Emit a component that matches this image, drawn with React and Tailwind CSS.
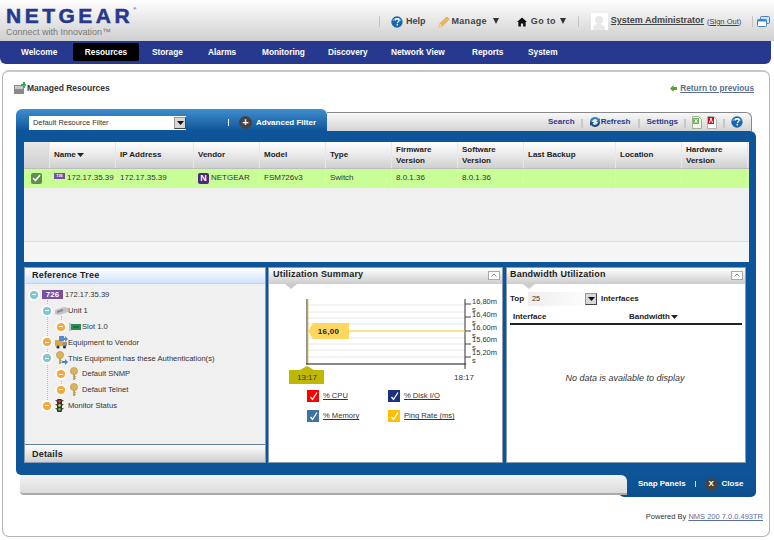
import React from "react";

const Caret = () => (
  <svg width="6" height="6" viewBox="0 0 6 6" className="inline-block shrink-0"><path d="M0 0h6L3 6z" fill="#333" /></svg>
);
const SmallCaret = () => (
  <svg width="7" height="4" viewBox="0 0 7 4" className="inline-block"><path d="M0 0h7L3.5 4z" fill="#222" /></svg>
);
const HelpIcon = ({ s = 12 }) => (
  <svg width={s} height={s} viewBox="0 0 14 14" className="shrink-0">
    <circle cx="7" cy="7" r="6.6" fill="#1a66ad" />
    <path d="M1.5 6A5.6 4.4 0 0 1 12.5 6 8 4 0 0 0 1.5 6z" fill="#6aa8dc" />
    <path d="M4.8 5.2C4.9 3.8 6 3.2 7.1 3.2c1.4 0 2.3.8 2.3 1.9 0 1.7-2 1.6-2 3.3" fill="none" stroke="#fff" strokeWidth="1.5" />
    <rect x="6.5" y="9.4" width="1.7" height="1.6" fill="#fff" />
  </svg>
);
const Pencil = () => (
  <svg width="12" height="12" viewBox="0 0 13 13" className="shrink-0">
    <path d="M1 12l1-3.5L9.5 1l2.5 2.5L4.5 11z" fill="#f0b94a" stroke="#c98c2a" strokeWidth=".6" />
    <path d="M1 12l1-3.5L4.5 11z" fill="#f5dfb0" />
  </svg>
);
const House = () => (
  <svg width="10" height="10" viewBox="0 0 11 11" className="shrink-0 block">
    <path d="M5.5.5L11 5.5H9.5V10.5H6.7V7.2H4.3V10.5H1.5V5.5H0z" fill="#111" />
  </svg>
);
const Sep = () => <span className="block h-[11px] w-px bg-[#c4c4c4]" />;
const TSep = () => <span className="h-[9px] w-[2px] border-x border-[#c8c8c8] mt-[2px]" />;

const Select = ({ label, w, bg = "bg-white" }) => (
  <div className={`flex h-[14px] items-center justify-between ${w} ${bg}`}>
    <span className="pl-[4px] text-[7.4px] text-[#333]">{label}</span>
    <span className="flex h-[12px] w-[12px] items-center justify-center border border-[#999] border-r-[#444] border-b-[#444] bg-[#d8d8d8]">
      <svg width="7" height="4" viewBox="0 0 7 4"><path d="M0 0h7L3.5 4z" fill="#111" /></svg>
    </span>
  </div>
);

const columns = [
  ["Name", "w-[66px]", "172.17.35.39"],
  ["IP Address", "w-[78px]", "172.17.35.39"],
  ["Vendor", "w-[66px]", "NETGEAR"],
  ["Model", "w-[66px]", "FSM726v3"],
  ["Type", "w-[66px]", "Switch"],
  ["Firmware Version", "w-[66px]", "8.0.1.36"],
  ["Software Version", "w-[66px]", "8.0.1.36"],
  ["Last Backup", "w-[92px]", ""],
  ["Location", "w-[66px]", ""],
  ["Hardware Version", "w-[66px]", ""],
];

const Badge = () => (
  <span className="flex h-[6px] w-[11px] items-center justify-center bg-[#7a4fa0] text-[4px] font-bold leading-none text-white">726</span>
);

const Table = () => (
  <div className="flex h-[120px] w-[725px] flex-col bg-[#f0f0f0]">
    <div className="flex h-[27px] bg-gradient-to-b from-[#ffffff] via-[#e9e9e9] to-[#cfcfcf] border-b border-[#bdbdbd]">
      <div className="w-[26px] border-r border-[#e8e8e8] bg-gradient-to-b from-[#e6e6e6] to-[#cfcfcf]" />
      {columns.map(([h, w]) => (
        <div key={h} className={`flex ${w} items-center gap-[1px] border-r border-[#e8e8e8] pb-[1px] pl-[4px] text-[8px] font-bold leading-[11px] text-[#222]`}>
          <span className={h === "Name" ? "" : "max-w-[50px]"}>{h}</span>
          {h === "Name" && <SmallCaret />}
        </div>
      ))}
    </div>
    <div className="flex h-[19px] bg-[#c9fd96] border-b border-[#dfe8d0]">
      <div className="flex w-[26px] items-center justify-center border-r border-[#e0f0c8]">
        <span className="flex h-[11px] w-[11px] items-center justify-center rounded-[2px] bg-[#5f8f4f]">
          <svg width="9" height="8" viewBox="0 0 9 8"><path d="M1 4l2.5 2.5L8 1" fill="none" stroke="#fff" strokeWidth="1.6" /></svg>
        </span>
      </div>
      {columns.map(([h, w, v]) => (
        <div key={h} className={`flex ${w} items-center border-r border-[#e0f0c8] pl-[4px] text-[8px] text-[#333]`}>
          {h === "Name" && <span className="mr-[2px] mb-[4px]"><Badge /></span>}
          {h === "Vendor" && (
            <span className="mr-[2px] flex h-[11px] w-[11px] items-center justify-center rounded-[2px] bg-[#4a2a80] text-[9px] font-bold leading-none text-white">N</span>
          )}
          {v}
        </div>
      ))}
    </div>
    <div className="flex-1" />
    <div className="h-[21px] border-t border-[#dddddd] bg-[#f5f5f5]" />
  </div>
);

const Expand = ({ color }) => (
  <span className="relative z-10 flex h-[8px] w-[8px] shrink-0 items-center justify-center rounded-full" style={{ background: color, boxShadow: "0 0 0 2px #fafafa" }}>
    <span className="h-px w-[4px] bg-white" />
  </span>
);

const Key = ({ arrow }) => (
  <svg width="13" height="14" viewBox="0 0 13 14" className="shrink-0">
    <circle cx="5" cy="4" r="3.6" fill="#d9b45a" stroke="#a98a3c" strokeWidth=".5" />
    <path d="M4 7h2v6H4zM6 9h1v1H6zM6 11h1v1H6z" fill="#c9a44f" />
    {arrow && <path d="M7 10h3V8l3 3-3 3v-2H7z" fill="#3d86d6" />}
  </svg>
);
const UnitIcon = () => (
  <svg width="13" height="10" viewBox="0 0 13 10" className="shrink-0">
    <path d="M0 4l9-3 4 1v4l-9 3-4-1z" fill="#bfc4cb" />
    <path d="M2 5l6-2v2l-6 2z" fill="#808890" />
  </svg>
);
const SlotIcon = () => (
  <svg width="12" height="8" viewBox="0 0 12 8" className="shrink-0">
    <rect x="0" y="0" width="2" height="8" fill="#b9c8b9" />
    <rect x="2" y="1" width="10" height="6" fill="#2e8b57" />
    <rect x="4" y="3" width="6" height="2" fill="#174" />
  </svg>
);
const TruckIcon = () => (
  <svg width="13" height="13" viewBox="0 0 13 13" className="shrink-0">
    <rect x="0" y="4" width="8" height="6" fill="#d8a848" />
    <rect x="4" y="0" width="5" height="5" fill="#5a88c8" />
    <path d="M8 2h2V0l3 3-3 3V4H8z" fill="#4a90e2" />
    <rect x="8" y="6" width="4" height="4" fill="#8a94a0" />
    <circle cx="3" cy="11" r="1.6" fill="#333" />
    <circle cx="9.5" cy="11" r="1.6" fill="#333" />
  </svg>
);
const Traffic = () => (
  <svg width="9" height="13" viewBox="0 0 9 13" className="shrink-0">
    <rect x="2" y="0" width="5" height="13" rx="1" fill="#333" />
    <path d="M0 1h2v2zM9 1H7v2zM0 5h2v2zM9 5H7v2zM0 9h2v2zM9 9H7v2z" fill="#555" />
    <circle cx="4.5" cy="2.4" r="1.3" fill="#d33" />
    <circle cx="4.5" cy="6.4" r="1.3" fill="#dc3" />
    <circle cx="4.5" cy="10.4" r="1.3" fill="#4c4" />
  </svg>
);

const tree = [
  { ml: "ml-0", color: "#7fc6cf", slot: "w-[23px]", icon: <span className="flex h-[9px] w-[21px] items-center justify-center bg-[#7a4fa0] text-[8px] font-bold leading-none text-white">726</span>, label: "172.17.35.39" },
  { ml: "ml-[13px]", color: "#7fc6cf", slot: "w-[13px]", icon: <UnitIcon />, label: "Unit 1" },
  { ml: "ml-[27px]", color: "#f0a93a", slot: "w-[13px]", icon: <SlotIcon />, label: "Slot 1.0" },
  { ml: "ml-[13px]", color: "#f0a93a", slot: "w-[13px]", icon: <TruckIcon />, label: "Equipment to Vendor" },
  { ml: "ml-[13px]", color: "#7fc6cf", slot: "w-[13px]", icon: <Key arrow />, label: "This Equipment has these Authentication(s)" },
  { ml: "ml-[27px]", color: "#f0a93a", slot: "w-[13px]", icon: <Key />, label: "Default SNMP" },
  { ml: "ml-[27px]", color: "#f0a93a", slot: "w-[13px]", icon: <Key />, label: "Default Telnet" },
  { ml: "ml-[13px]", color: "#f0a93a", slot: "w-[13px]", icon: <Traffic />, label: "Monitor Status" },
];

const TreePanel = () => (
  <div className="flex h-[196px] w-[242px] flex-col border border-[#8a9db0] bg-[#f0f0f0]">
    <div className="flex h-[16px] items-center bg-gradient-to-b from-[#ffffff] to-[#cfe3fb] pl-[7px] text-[9px] font-bold tracking-[0.2px] text-[#222] border-b border-[#c8d4e0]">Reference Tree</div>
    <div className="relative flex flex-1 flex-col pl-[5px] pt-[3px]">
      <span className="absolute left-[22px] top-[16px] h-[104px] border-l border-dotted border-[#bbbbbb]" />
      <span className="absolute left-[36px] top-[32px] h-[14px] border-l border-dotted border-[#bbbbbb]" />
      <span className="absolute left-[36px] top-[94px] h-[14px] border-l border-dotted border-[#bbbbbb]" />
      {tree.map((t) => (
        <div key={t.label} className={`flex h-[15.85px] items-center ${t.ml} gap-[4px]`}>
          <Expand color={t.color} />
          <span className="flex items-center whitespace-nowrap text-[7.6px] text-[#333]">
            <span className={`flex ${t.slot} items-center`}>{t.icon}</span>
            <span>{t.label}</span>
          </span>
        </div>
      ))}
    </div>
    <div className="flex h-[18px] items-center border-t border-[#5f7f9f] bg-gradient-to-b from-[#ffffff] to-[#cfcfcf] pl-[7px] pt-[2px] text-[9px] font-bold tracking-[0.2px] text-[#222]">Details</div>
  </div>
);

const PanelHeader = ({ title, pl = "pl-[4px]" }) => (
  <div className={`relative flex h-[16px] shrink-0 items-center justify-between bg-gradient-to-b from-[#ffffff] to-[#cccccc] pb-[2px] ${pl} pr-[2px]`}>
    <span className="text-[9px] font-bold tracking-[0.2px] text-[#222]">{title}</span>
    <span className="flex h-[9px] w-[12px] items-center justify-center border border-[#aaaaaa] bg-white">
      <svg width="6" height="4" viewBox="0 0 6 4"><path d="M0.5 3.5L3 1l2.5 2.5" fill="none" stroke="#888" /></svg>
    </span>
    <svg width="12" height="5" viewBox="0 0 12 5" className="absolute left-[16px] top-[16px]"><path d="M0 0h12L6 5z" fill="#cccccc" /></svg>
  </div>
);

const Check = ({ color, label }) => (
  <div className="flex items-center gap-[4px]">
    <span className="flex h-[12px] w-[12px] items-center justify-center" style={{ background: color }}>
      <svg width="9" height="9" viewBox="0 0 9 9"><path d="M1.5 5l2 2.5L8 .5" fill="none" stroke="#fff" strokeWidth="1.3" /></svg>
    </span>
    <span className="text-[7.6px] text-[#333] underline">{label}</span>
  </div>
);

const Chart = () => {
  const grid = [6, 13, 19, 25, 39, 45, 51, 58];
  const ticks = [
    [5, 5, "16,80m"],
    [18, 18, "16,40m"],
    [31, 32, "16,00m"],
    [43, 45, "15,60m"],
    [56, 58, "15,20m"],
  ];
  return (
    <svg width="233" height="100" viewBox="0 0 233 100" className="block">
      <g transform="translate(-1,15)">
        {grid.map((y) => (
          <line key={y} x1="39" x2="197" y1={y} y2={y} stroke="#e8e8e8" strokeWidth="1" />
        ))}
        <line x1="39" x2="39" y1="0" y2="65" stroke="#222" />
        <line x1="39.8" x2="39.8" y1="0" y2="65" stroke="#c8b800" />
        <line x1="38" x2="198" y1="65" y2="65" stroke="#111" strokeWidth="1.2" />
        <line x1="197" x2="197" y1="0" y2="70" stroke="#333" />
        {ticks.map(([y, t, l]) => (
          <g key={l}>
            <line x1="197" x2="203" y1={t} y2={t} stroke="#444" />
            <text x="204" y={y} fontSize="7.5" fill="#333">{l}</text>
            <text x="204" y={y + 8} fontSize="7.5" fill="#333">s</text>
          </g>
        ))}
        <line x1="40" x2="197" y1="32" y2="32" stroke="#fcc419" strokeWidth="1" />
        <path d="M40 32l5-8h36v16H45z" fill="#ffd75e" />
        <text x="60.5" y="35" fontSize="8" fontWeight="700" textAnchor="middle" fill="#222" letterSpacing=".3">16,00</text>
        <path d="M39 67l-7 4H21v14h35V71H46z" fill="#bfb800" />
        <text x="39" y="81" fontSize="8" textAnchor="middle" fill="#333">13:17</text>
        <text x="196" y="81" fontSize="8" textAnchor="middle" fill="#333">18:17</text>
      </g>
    </svg>
  );
};

const UtilPanel = () => (
  <div className="flex h-[196px] w-[235px] flex-col border border-[#8a9db0] bg-white">
    <PanelHeader title="Utilization Summary" />
    <Chart />
    <div className="ml-[38px] mt-[6px] grid grid-cols-[81px_auto] gap-y-[8px]">
      <Check color="#ff0000" label="% CPU" />
      <Check color="#1c2f80" label="% Disk I/O" />
      <Check color="#41719f" label="% Memory" />
      <Check color="#ffc000" label="Ping Rate (ms)" />
    </div>
  </div>
);

const BandPanel = () => (
  <div className="ml-[1px] flex h-[196px] w-[240px] flex-col border border-[#8a9db0] bg-white">
    <PanelHeader title="Bandwidth Utilization" pl="pl-[3px]" />
    <div className="mt-[8px] flex items-center pl-[3px]">
      <span className="w-[18px] text-[8px] font-bold text-[#222]">Top</span>
      <Select label="25" w="w-[69px]" bg="bg-gradient-to-r from-[#eeeeee] to-[#ffffff]" />
      <span className="ml-[4px] text-[8px] font-bold text-[#222]">Interfaces</span>
    </div>
    <div className="mx-[3px] mt-[3px] flex h-[16px] items-center border-b-2 border-[#222] pl-[3px] pt-[1px] text-[8px] font-bold text-[#222]">
      <span className="w-[116px]">Interface</span>
      <span className="flex items-center gap-[1px]">Bandwidth<SmallCaret /></span>
    </div>
    <div className="mt-[47px] pr-[2px] text-center text-[9px] italic text-[#333]">No data is available to display</div>
  </div>
);

const ExcelPdf = () => (
  <span className="flex gap-[5px]">
    <svg width="10" height="13" viewBox="0 0 10 13"><path d="M.5.5h6l3 3v9H.5z" fill="#eef5e8" stroke="#9ab58f" /><rect x="1" y="2" width="6" height="6" fill="#6fae5a" /><path d="M2.5 3l3 4M5.5 3l-3 4" stroke="#fff" /></svg>
    <svg width="10" height="13" viewBox="0 0 10 13"><path d="M.5.5h6l3 3v9H.5z" fill="#fff" stroke="#b0b0b0" /><rect x="1" y="1" width="6" height="7" fill="#d01020" /><path d="M4 2L2.5 7M4 2l1.5 5" stroke="#fff" /></svg>
  </span>
);

export default function App() {
  return (
    <div className="h-[540px] w-[774px] overflow-hidden bg-white font-['Liberation_Sans',Arial,sans-serif]">
      <header className="flex h-[41px] bg-gradient-to-b from-[#ffffff] to-[#cfcfcf] pl-[6px]">
        <div className="w-[373px] shrink-0 pt-[6px]">
          <div className="flex items-start text-[21px] font-bold leading-[20px] tracking-[3.5px] text-[#27398f] [-webkit-text-stroke:0.5px_#27398f]">NETGEAR<span className="text-[4px] leading-[6px] tracking-normal [-webkit-text-stroke:0]">®</span></div>
          <div className="mt-[1px] text-[9px] leading-[10px] text-[#777]">Connect with Innovation™</div>
        </div>
        <div className="flex shrink-0 items-center whitespace-nowrap pt-[2px] text-[9px] font-bold text-[#444]">
          <Sep />
          <span className="ml-[11px] flex items-center gap-[3px]"><HelpIcon />Help</span>
          <span className="ml-[12px] flex items-center gap-[2px] tracking-[0.3px]"><Pencil />Manage</span>
          <span className="ml-[6px]"><Caret /></span>
          <span className="ml-[18px]"><House /></span>
          <span className="ml-[4px] tracking-[0.3px]">Go to</span>
          <span className="ml-[4px]"><Caret /></span>
          <span className="ml-[12px]"><Sep /></span>
          <span className="ml-[12px] flex h-[17px] w-[17px] items-end justify-center overflow-hidden bg-white">
            <svg width="14" height="15" viewBox="0 0 14 15"><circle cx="7" cy="5" r="4" fill="#e8e8e8" /><path d="M1 15c0-5 3-6 6-6s6 1 6 6z" fill="#e8e8e8" /></svg>
          </span>
          <span className="mb-[1px] ml-[3px] underline">System Administrator</span>
          <span className="ml-[3px] text-[7.5px] font-normal">(<span className="underline">Sign Out</span>)</span>
          <span className="ml-[11px]"><Sep /></span>
          <svg width="13" height="11" viewBox="0 0 13 11" className="ml-[4px]">
            <rect x="3.5" y=".5" width="9" height="7" rx="1" fill="#cfe2f7" stroke="#3f85c8" />
            <rect x=".5" y="3.5" width="9" height="7" rx="1" fill="#fff" stroke="#3f85c8" />
            <rect x=".5" y="3.5" width="9" height="2" fill="#3f85c8" />
          </svg>
        </div>
      </header>

      <nav className="flex h-[23px] w-[771px] items-center rounded-b-[6px] bg-[#27398f] pb-[1px] pl-[21px] text-[8.3px] font-bold text-white">
        <span className="w-[52px]">Welcome</span>
        <span className="flex h-[18px] w-[66px] items-center justify-center rounded-[2px] bg-black">Resources</span>
        <span className="ml-[13px] w-[56px]">Storage</span>
        <span className="w-[54px]">Alarms</span>
        <span className="w-[66px]">Monitoring</span>
        <span className="w-[63px]">Discovery</span>
        <span className="w-[81px]">Network View</span>
        <span className="w-[56px]">Reports</span>
        <span>System</span>
      </nav>

      <main className="ml-[2px] mt-[6px] h-[467px] w-[768px] rounded-[7px] border border-[#b4b4b4] border-t-2 border-t-[#c8c8c8] bg-white">
        <div className="flex h-[37px] items-center justify-between pb-[5px] pl-[11px] pr-[15px]">
          <span className="flex items-center gap-[1px] text-[8.5px] font-bold text-[#333]">
            <svg width="12" height="12" viewBox="0 0 12 12"><rect y="3" width="10" height="9" fill="#8a8a8a" /><rect x="1" y="4" width="8" height="3" fill="#c8c8c8" /><path d="M9 0v2h-2v2h2v2h2V4h1V2h-1V0z" fill="#2fb84a" /></svg>
            Managed Resources
          </span>
          <span className="flex items-center gap-[3px] text-[8.3px] font-bold text-[#5a6f8f]">
            <svg width="7" height="7" viewBox="0 0 7 7"><path d="M0 3.5L3.5 0v2H7v3H3.5v2z" fill="#5aa03a" /></svg>
            <span className="underline">Return to previous</span>
          </span>
        </div>

        <div className="ml-[13px] w-[740px]">
          <div className="flex h-[22px] items-end">
            <div className="flex h-[22px] w-[311px] items-center rounded-t-[6px] bg-gradient-to-b from-[#3f8fd0] to-[#0d5598] pl-[13px] pt-[5px]">
              <Select label="Default Resource Filter" w="w-[157px]" />
              <span className="ml-[42px] h-[7px] w-px bg-white" />
              <span className="ml-[10px] flex h-[13px] w-[13px] items-center justify-center rounded-full bg-[#444] text-[11px] font-bold leading-none text-white">+</span>
              <span className="ml-[4px] text-[8px] font-bold text-white">Advanced Filter</span>
            </div>
            <div className="flex h-[19px] w-[425px] items-center justify-end gap-[6px] rounded-tr-[6px] border-r border-t border-[#888] bg-gradient-to-b from-[#f8f8f8] to-[#d4d4d4] pr-[8px] text-[8px] font-bold text-[#27398f]">
              <span>Search</span>
              <TSep />
              <span className="mr-[2px] flex items-center">
                <svg width="12" height="12" viewBox="0 0 12 12"><path d="M1 6a5 5 0 0 1 9-3l1-1v4H7l1.5-1.5A3 3 0 0 0 3 6z" fill="#2f7fb8" /><path d="M11 6a5 5 0 0 1-9 3l-1 1V6h4L3.5 7.5A3 3 0 0 0 9 6z" fill="#174f7f" /></svg>
                Refresh
              </span>
              <TSep />
              <span>Settings</span>
              <TSep />
              <ExcelPdf />
              <TSep />
              <HelpIcon s={12} />
            </div>
          </div>

          <div className="flex h-[344px] w-[740px] flex-col rounded-tr-[6px] rounded-bl-[5px] bg-[#0d5598] px-[8px] pt-[11px]">
            <Table />
            <div className="mt-[5px] flex gap-[2px]">
              <TreePanel />
              <UtilPanel />
              <BandPanel />
            </div>
          </div>

          <div className="flex h-[22px] w-[740px] items-start">
            <div className="relative z-10 ml-[4px] h-[20px] w-[607px] rounded-bl-[4px] rounded-tr-[6px] border-b-2 border-[#aaaaaa] bg-gradient-to-b from-[#f2f2f2] to-[#dcdcdc]" />
            <div className="-ml-[8px] flex h-[22px] w-[137px] items-center rounded-b-[5px] bg-gradient-to-b from-[#0d5598] to-[#0d4f8c] pb-[4px] pl-[19px] text-[8px] font-bold text-white">
              <span>Snap Panels</span>
              <span className="ml-[9px] h-[6px] w-px bg-[#cfe0f0]" />
              <span className="ml-[9px] flex h-[13px] w-[13px] items-center justify-center rounded-full bg-[#444] text-[8px] font-bold leading-none">X</span>
              <span className="ml-[4px]">Close</span>
            </div>
          </div>

          <div className="-mr-[7px] mt-[14px] flex justify-end text-[7.5px] text-[#333]">
            Powered By&nbsp;<span className="text-[#5a6f9f] underline">NMS 200 7.0.0.493TR</span>
          </div>
        </div>
      </main>
    </div>
  );
}
